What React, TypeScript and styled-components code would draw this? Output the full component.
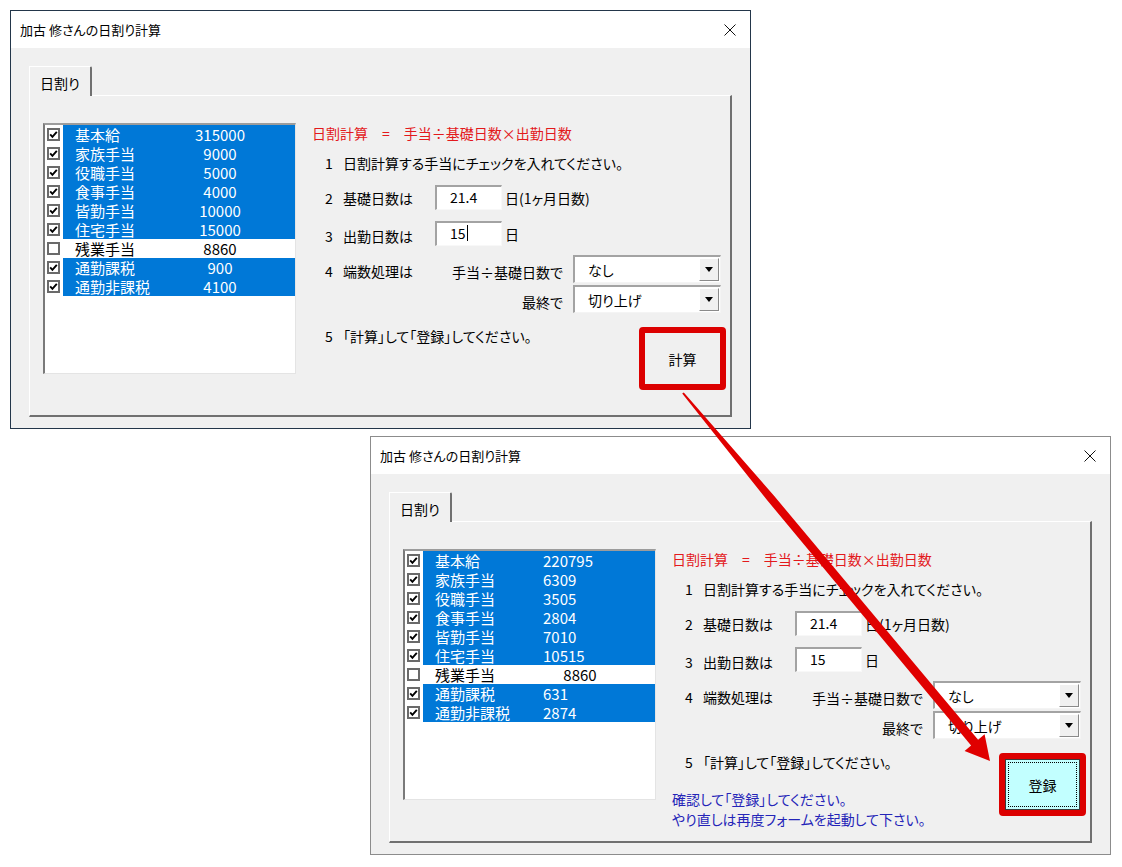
import React from 'react';
import styled, { createGlobalStyle } from 'styled-components';

const GlobalStyle = createGlobalStyle`
  html, body {
    margin: 0;
    padding: 0;
    background: #fff;
  }
  body {
    font-family: "Noto Sans CJK JP", "Noto Sans", sans-serif;
    font-feature-settings: "palt";
    color: #000;
  }
`;

interface Allowance {
  name: string;
  value: string;
  checked: boolean;
  align?: 'left' | 'center';
}

const before: Allowance[] = [
  { name: '基本給', value: '315000', checked: true },
  { name: '家族手当', value: '9000', checked: true },
  { name: '役職手当', value: '5000', checked: true },
  { name: '食事手当', value: '4000', checked: true },
  { name: '皆勤手当', value: '10000', checked: true },
  { name: '住宅手当', value: '15000', checked: true },
  { name: '残業手当', value: '8860', checked: false },
  { name: '通勤課税', value: '900', checked: true },
  { name: '通勤非課税', value: '4100', checked: true },
];

const after: Allowance[] = [
  { name: '基本給', value: '220795', checked: true, align: 'left' },
  { name: '家族手当', value: '6309', checked: true, align: 'left' },
  { name: '役職手当', value: '3505', checked: true, align: 'left' },
  { name: '食事手当', value: '2804', checked: true, align: 'left' },
  { name: '皆勤手当', value: '7010', checked: true, align: 'left' },
  { name: '住宅手当', value: '10515', checked: true, align: 'left' },
  { name: '残業手当', value: '8860', checked: false },
  { name: '通勤課税', value: '631', checked: true, align: 'left' },
  { name: '通勤非課税', value: '2874', checked: true, align: 'left' },
];

interface FormProps {
  x: number;
  y: number;
  active?: boolean;
  items: Allowance[];
  daysWorked: string;
  caret?: boolean;
  button: string;
  focused?: boolean;
  notes?: string[];
}

const DropArrow = () => (
  <DropButton>
    <svg width="8" height="5" viewBox="0 0 8 5">
      <path d="M0 0 L8 0 L4 5 Z" fill="#000" />
    </svg>
  </DropButton>
);

const Form: React.FC<FormProps> = ({ x, y, active, items, daysWorked, caret, button, focused, notes }) => {
  return (
    <WindowFrame $x={x} $y={y} $active={active}>
      <TitleBar>
        <span>加古 修さんの日割り計算</span>
        <svg width="12" height="12" viewBox="0 0 12 12">
          <path d="M0.5 0.5 L11.5 11.5 M11.5 0.5 L0.5 11.5" stroke="#111" strokeWidth="1" />
        </svg>
      </TitleBar>

      <WindowBody>
        <TabStrip>
          <Tab>日割り</Tab>
        </TabStrip>
        <Page>
          <AllowanceList>
            {items.map((it) => (
              <ListRow key={it.name}>
                <CheckBox>
                  {it.checked && (
                    <svg width="9" height="9" viewBox="0 0 9 9">
                      <path d="M1.2 4.4 L3.4 6.8 L7.8 1.8" stroke="#000" strokeWidth="1.9" fill="none" />
                    </svg>
                  )}
                </CheckBox>
                <RowBand $selected={it.checked}>
                  <ItemName>{it.name}</ItemName>
                  <ItemValue $align={it.align || 'center'}>{it.value}</ItemValue>
                </RowBand>
              </ListRow>
            ))}
          </AllowanceList>

          <Side>
            <Formula>日割計算　=　手当÷基礎日数×出勤日数</Formula>

            <StepRow $top={10} $height={20}>
              <StepNo>1</StepNo>
              <span>日割計算する手当にチェックを入れてください。</span>
            </StepRow>

            <StepRow $top={12} $height={25}>
              <StepNo>2</StepNo>
              <StepLabel>基礎日数は</StepLabel>
              <TextBox>21.4</TextBox>
              <Unit>日(1ヶ月日数)</Unit>
            </StepRow>

            <StepRow $top={11} $height={25}>
              <StepNo $low>3</StepNo>
              <StepLabel $low>出勤日数は</StepLabel>
              <TextBox>
                {daysWorked}
                {caret && <Caret />}
              </TextBox>
              <Unit>日</Unit>
            </StepRow>

            <StepRow $top={9} $height={28}>
              <StepNo $low>4</StepNo>
              <StepLabel $low>端数処理は</StepLabel>
              <SubLabel>手当÷基礎日数で</SubLabel>
              <ComboBox>
                <ComboText>なし</ComboText>
                <DropArrow />
              </ComboBox>
            </StepRow>

            <StepRow $top={2} $height={28}>
              <StepNo />
              <StepLabel />
              <SubLabel>最終で</SubLabel>
              <ComboBox>
                <ComboText>切り上げ</ComboText>
                <DropArrow />
              </ComboBox>
            </StepRow>

            <Bottom>
              <div>
                <StepRow $top={0} $height={18}>
                  <StepNo>5</StepNo>
                  <span>「計算」して「登録」してください。</span>
                </StepRow>
                {notes && (
                  <Notes>
                    {notes.map((n) => (
                      <div key={n}>{n}</div>
                    ))}
                  </Notes>
                )}
              </div>
              <Highlight>
                <CmdButton $focused={focused}>{button}</CmdButton>
              </Highlight>
            </Bottom>
          </Side>
        </Page>
      </WindowBody>
    </WindowFrame>
  );
};

const App: React.FC = () => {
  return (
    <>
      <GlobalStyle />
      <Desktop>
        <Form x={10} y={10} active items={before} daysWorked="15" caret button="計算" />
        <Form
          x={370}
          y={436}
          items={after}
          daysWorked="15"
          button="登録"
          focused
          notes={['確認して「登録」してください。', 'やり直しは再度フォームを起動して下さい。']}
        />
        <Arrow width="1122" height="867" viewBox="0 0 1122 867">
          <polygon
            points="683.8,392.4 773.6,495.3 978.1,739.7 984.6,734.3 990,761 964.6,750.9 971.1,745.5 767.4,500.5 682.2,393.6"
            fill="#e00000"
          />
        </Arrow>
      </Desktop>
    </>
  );
};

export default App;

const Desktop = styled.div`
  position: relative;
  width: 1122px;
  height: 867px;
  background: #fff;
  overflow: hidden;
`;

const Arrow = styled.svg`
  position: absolute;
  left: 0;
  top: 0;
  pointer-events: none;
`;

const WindowFrame = styled.div<{ $x: number; $y: number; $active?: boolean }>`
  position: absolute;
  left: ${(p) => p.$x}px;
  top: ${(p) => p.$y}px;
  width: 741px;
  height: 419px;
  box-sizing: border-box;
  border: 1px solid ${(p) => (p.$active ? '#23364a' : '#8c8c8c')};
  background: #f0f0f0;
  display: flex;
  flex-direction: column;
`;

const TitleBar = styled.div`
  height: 37px;
  flex-shrink: 0;
  background: #fff;
  display: flex;
  align-items: center;
  justify-content: space-between;
  padding: 0 14px 0 9px;
  font-size: 13px;
`;

const WindowBody = styled.div`
  padding: 18px 18px 0 18px;
  display: flex;
  flex-direction: column;
`;

const TabStrip = styled.div`
  display: flex;
  height: 29px;
`;

const Tab = styled.div`
  position: relative;
  z-index: 1;
  width: 63px;
  height: 30px;
  box-sizing: border-box;
  background: #f0f0f0;
  border-top: 1px solid #fff;
  border-left: 1px solid #fff;
  border-right: 2px solid #707070;
  border-top-right-radius: 2px;
  padding: 2px 0 0 10px;
  display: flex;
  align-items: center;
  font-size: 14px;
`;

const Page = styled.div`
  height: 322px;
  box-sizing: border-box;
  border-top: 1px solid #fff;
  border-left: 1px solid #fff;
  border-right: 2px solid #707070;
  border-bottom: 2px solid #707070;
  padding: 27px 0 0 13px;
  display: flex;
  align-items: flex-start;
`;

const AllowanceList = styled.div`
  width: 253px;
  height: 251px;
  box-sizing: border-box;
  background: #fff;
  border-top: 2px solid #9c9c9c;
  border-left: 2px solid #7a7a7a;
  border-right: 1px solid #e4e4e4;
  border-bottom: 1px solid #e4e4e4;
  display: flex;
  flex-direction: column;
`;

const ListRow = styled.div`
  height: 19px;
  display: flex;
  align-items: center;
`;

const CheckBox = styled.span`
  width: 13px;
  height: 13px;
  box-sizing: border-box;
  margin-left: 2px;
  border: 2px solid #6a6a6a;
  background: #fff;
  display: flex;
  align-items: center;
  justify-content: center;
`;

const RowBand = styled.div<{ $selected: boolean }>`
  flex: 1;
  height: 19px;
  margin-left: 3px;
  padding-left: 12px;
  display: flex;
  align-items: center;
  background: ${(p) => (p.$selected ? '#0078d7' : '#fff')};
  color: ${(p) => (p.$selected ? '#fff' : '#000')};
  font-size: 15px;
  line-height: 19px;
`;

const ItemName = styled.span`
  width: 108px;
  white-space: nowrap;
`;

const ItemValue = styled.span<{ $align: 'left' | 'center' }>`
  width: 74px;
  text-align: ${(p) => p.$align};
`;

const Side = styled.div`
  width: 414px;
  margin-left: 16px;
  display: flex;
  flex-direction: column;
  font-size: 14px;
`;

const Formula = styled.div`
  height: 20px;
  line-height: 20px;
  color: #e3191c;
  white-space: nowrap;
`;

const StepRow = styled.div<{ $top: number; $height: number }>`
  margin-top: ${(p) => p.$top}px;
  height: ${(p) => p.$height}px;
  padding-left: 13px;
  display: flex;
  align-items: center;
  white-space: nowrap;
`;

const StepNo = styled.span<{ $low?: boolean }>`
  width: 18px;
  padding-top: ${(p) => (p.$low ? 4 : 0)}px;
`;

const StepLabel = styled.span<{ $low?: boolean }>`
  width: 92px;
  padding-top: ${(p) => (p.$low ? 4 : 0)}px;
`;

const TextBox = styled.div`
  width: 67px;
  height: 25px;
  box-sizing: border-box;
  background: #fff;
  border-top: 2px solid #a3a3a3;
  border-left: 2px solid #a3a3a3;
  border-right: 1px solid #f8f8f8;
  border-bottom: 1px solid #f8f8f8;
  padding: 0 0 3px 13px;
  display: flex;
  align-items: center;
  font-size: 14px;
`;

const Caret = styled.span`
  width: 1px;
  height: 16px;
  margin-left: 1px;
  background: #000;
`;

const Unit = styled.span`
  margin-left: 3px;
`;

const SubLabel = styled.span`
  width: 128px;
  margin-right: 10px;
  padding-top: 5px;
  text-align: right;
`;

const ComboBox = styled.div`
  width: 148px;
  height: 28px;
  box-sizing: border-box;
  background: #fff;
  border-top: 2px solid #a3a3a3;
  border-left: 2px solid #a3a3a3;
  border-right: 1px solid #f4f4f4;
  border-bottom: 1px solid #f4f4f4;
  display: flex;
  align-items: stretch;
  justify-content: space-between;
`;

const ComboText = styled.span`
  padding-left: 13px;
  display: flex;
  align-items: center;
`;

const DropButton = styled.span`
  width: 20px;
  margin: 1px 1px 1px 0;
  box-sizing: border-box;
  background: #f0f0f0;
  border-top: 1px solid #fff;
  border-left: 1px solid #fff;
  border-right: 1px solid #8a8a8a;
  border-bottom: 1px solid #8a8a8a;
  display: flex;
  align-items: center;
  justify-content: center;
`;

const Bottom = styled.div`
  margin-top: 14px;
  display: flex;
  justify-content: space-between;
  align-items: flex-start;
`;

const Notes = styled.div`
  margin-top: 18px;
  color: #2424b8;
  line-height: 20px;
  white-space: nowrap;
`;

const Highlight = styled.div`
  width: 87px;
  height: 63px;
  box-sizing: border-box;
  border: 6px solid #dc0000;
  border-radius: 4px;
  display: flex;
`;

const CmdButton = styled.div<{ $focused?: boolean }>`
  flex: 1;
  display: flex;
  align-items: center;
  justify-content: center;
  font-size: 14px;
  background: ${(p) => (p.$focused ? '#c2ffff' : '#f0f0f0')};
  border: 1px solid ${(p) => (p.$focused ? '#3a3a3a' : '#f0f0f0')};
  outline: ${(p) => (p.$focused ? '1px dotted #000' : 'none')};
  outline-offset: -4px;
`;
